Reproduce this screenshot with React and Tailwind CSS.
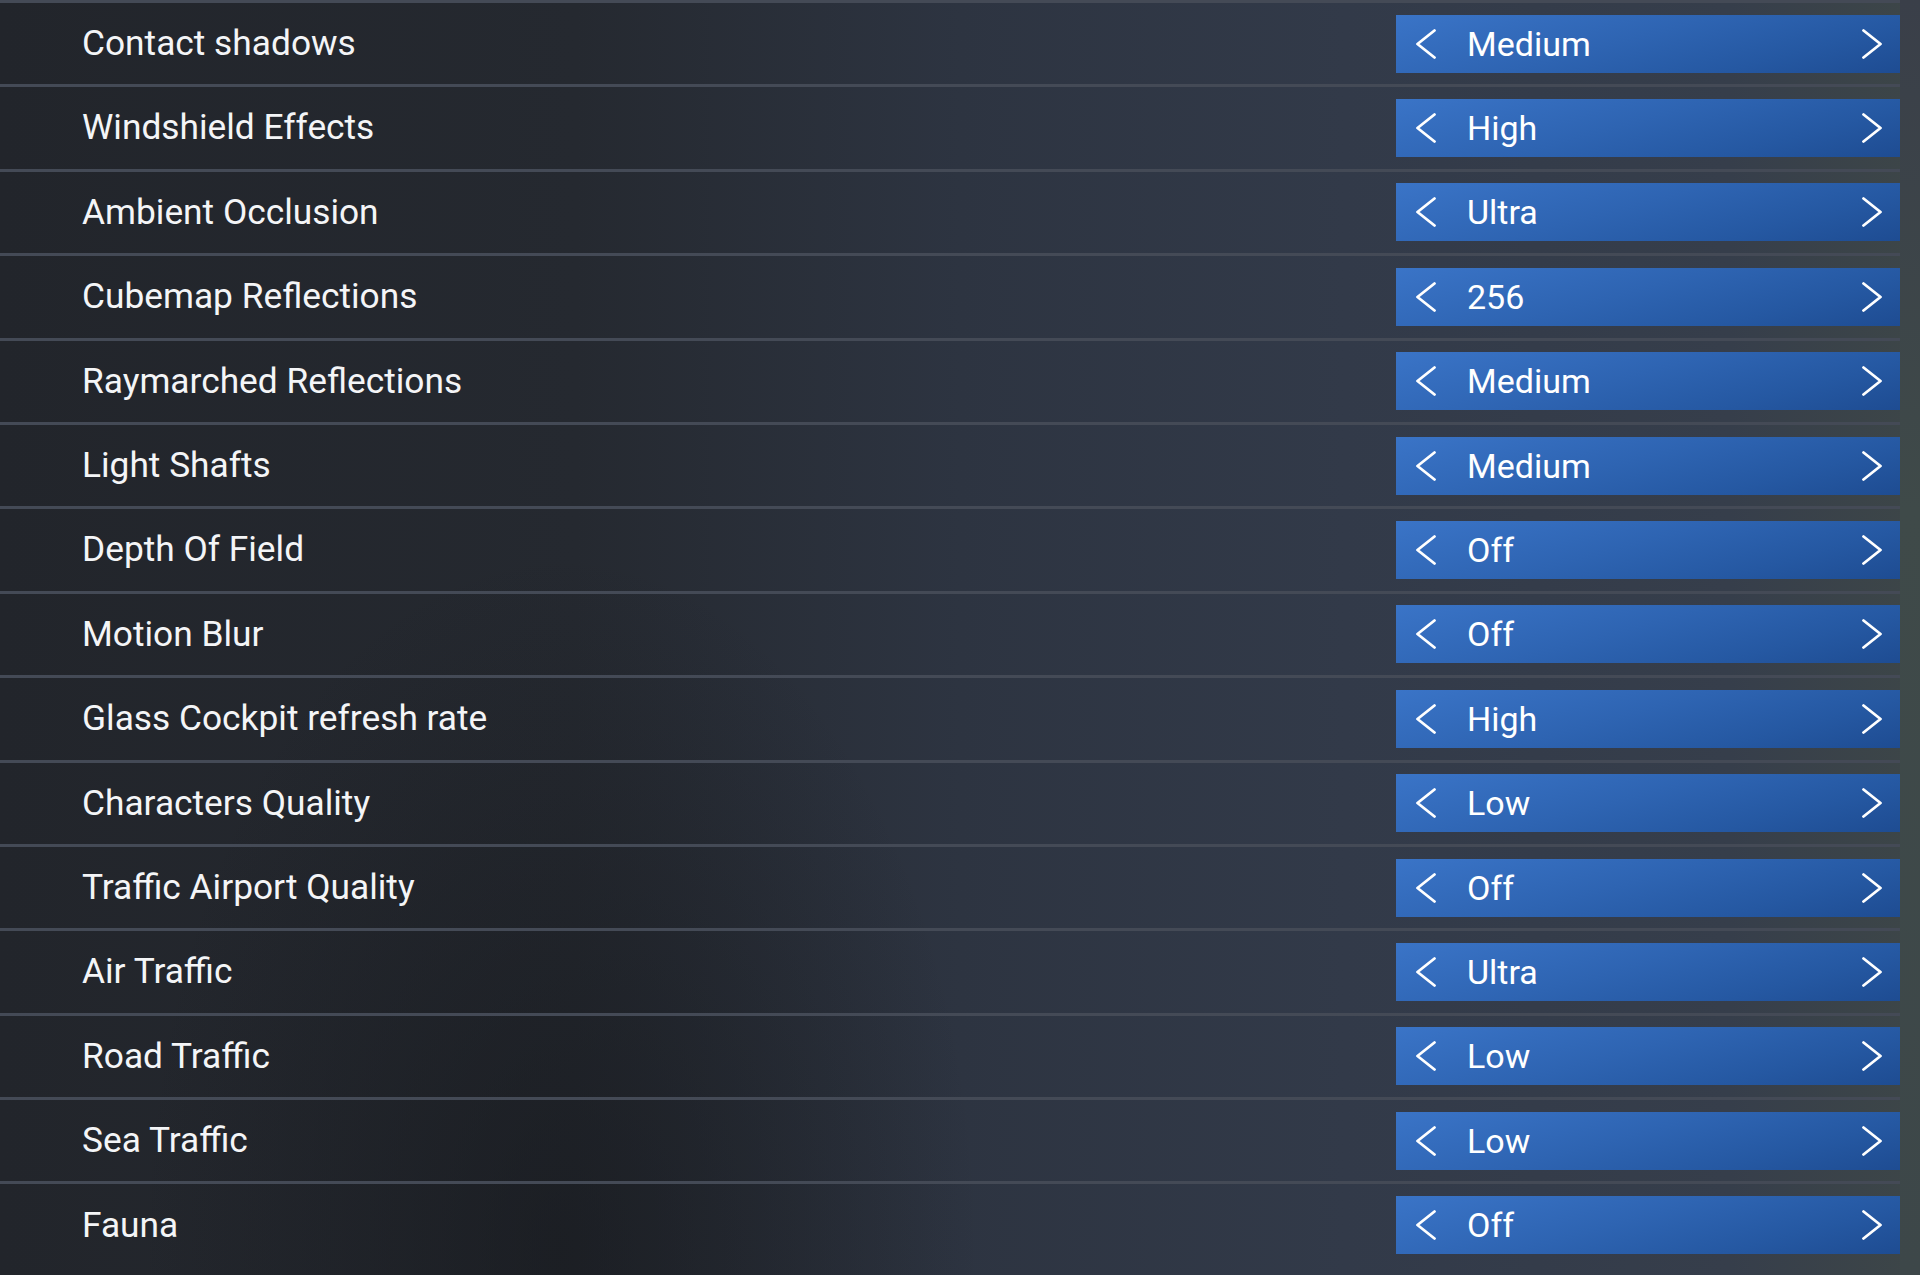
import React from 'react';

const settings = [
    ['Contact shadows', 'Medium'],
    ['Windshield Effects', 'High'],
    ['Ambient Occlusion', 'Ultra'],
    ['Cubemap Reflections', '256'],
    ['Raymarched Reflections', 'Medium'],
    ['Light Shafts', 'Medium'],
    ['Depth Of Field', 'Off'],
    ['Motion Blur', 'Off'],
    ['Glass Cockpit refresh rate', 'High'],
    ['Characters Quality', 'Low'],
    ['Traffic Airport Quality', 'Off'],
    ['Air Traffic', 'Ultra'],
    ['Road Traffic', 'Low'],
    ['Sea Traffic', 'Low'],
    ['Fauna', 'Off'],
];

const Chevron = ({ right }) => (
    <svg width="20" height="30" viewBox="0 0 20 30" fill="none" stroke="white" strokeWidth="2.8" strokeLinecap="round" strokeLinejoin="round">
        {right ? <polyline points="1.5,1.5 18.5,15 1.5,28.5" /> : <polyline points="18.5,1.5 1.5,15 18.5,28.5" />}
    </svg>
);

const App = () => {
    return (
        <div className="w-[1920px] h-[1275px] overflow-hidden flex bg-[linear-gradient(90deg,#22252b_0%,#252930_30%,#2d3441_50%,#323a49_70%,#363e4b_90%,#3d4648_100%)] font-['Roboto',sans-serif] text-white">
            {/* Settings list */}
            <div className="w-[1900px] flex flex-col bg-[radial-gradient(ellipse_420px_700px_at_560px_1250px,rgba(20,22,26,0.55),transparent)]">
                {settings.map(([label, value]) => (
                    <div key={label} className="h-[84.4px] shrink-0 flex items-center border-t-[3px] border-[#444a56]">
                        <div className="flex-1 pl-[82px] text-[35.3px] leading-none text-[#f4f5f7]">{label}</div>
                        <div className="w-[504px] h-[58px] flex items-center bg-[linear-gradient(165deg,#3a74c7_0%,#2e64b2_45%,#2558a2_75%,#1e4c92_100%)]">
                            <div className="ml-[20px]">
                                <Chevron />
                            </div>
                            <span className="ml-[31px] flex-1 text-[34px] leading-none">{value}</span>
                            <div className="mr-[18px]">
                                <Chevron right />
                            </div>
                        </div>
                    </div>
                ))}
            </div>
            {/* Right edge strip */}
            <div className="flex-1 bg-[linear-gradient(180deg,#3a3f49_0%,#3f4a49_40%,#3d4749_100%)]" />
        </div>
    );
};

export default App;
